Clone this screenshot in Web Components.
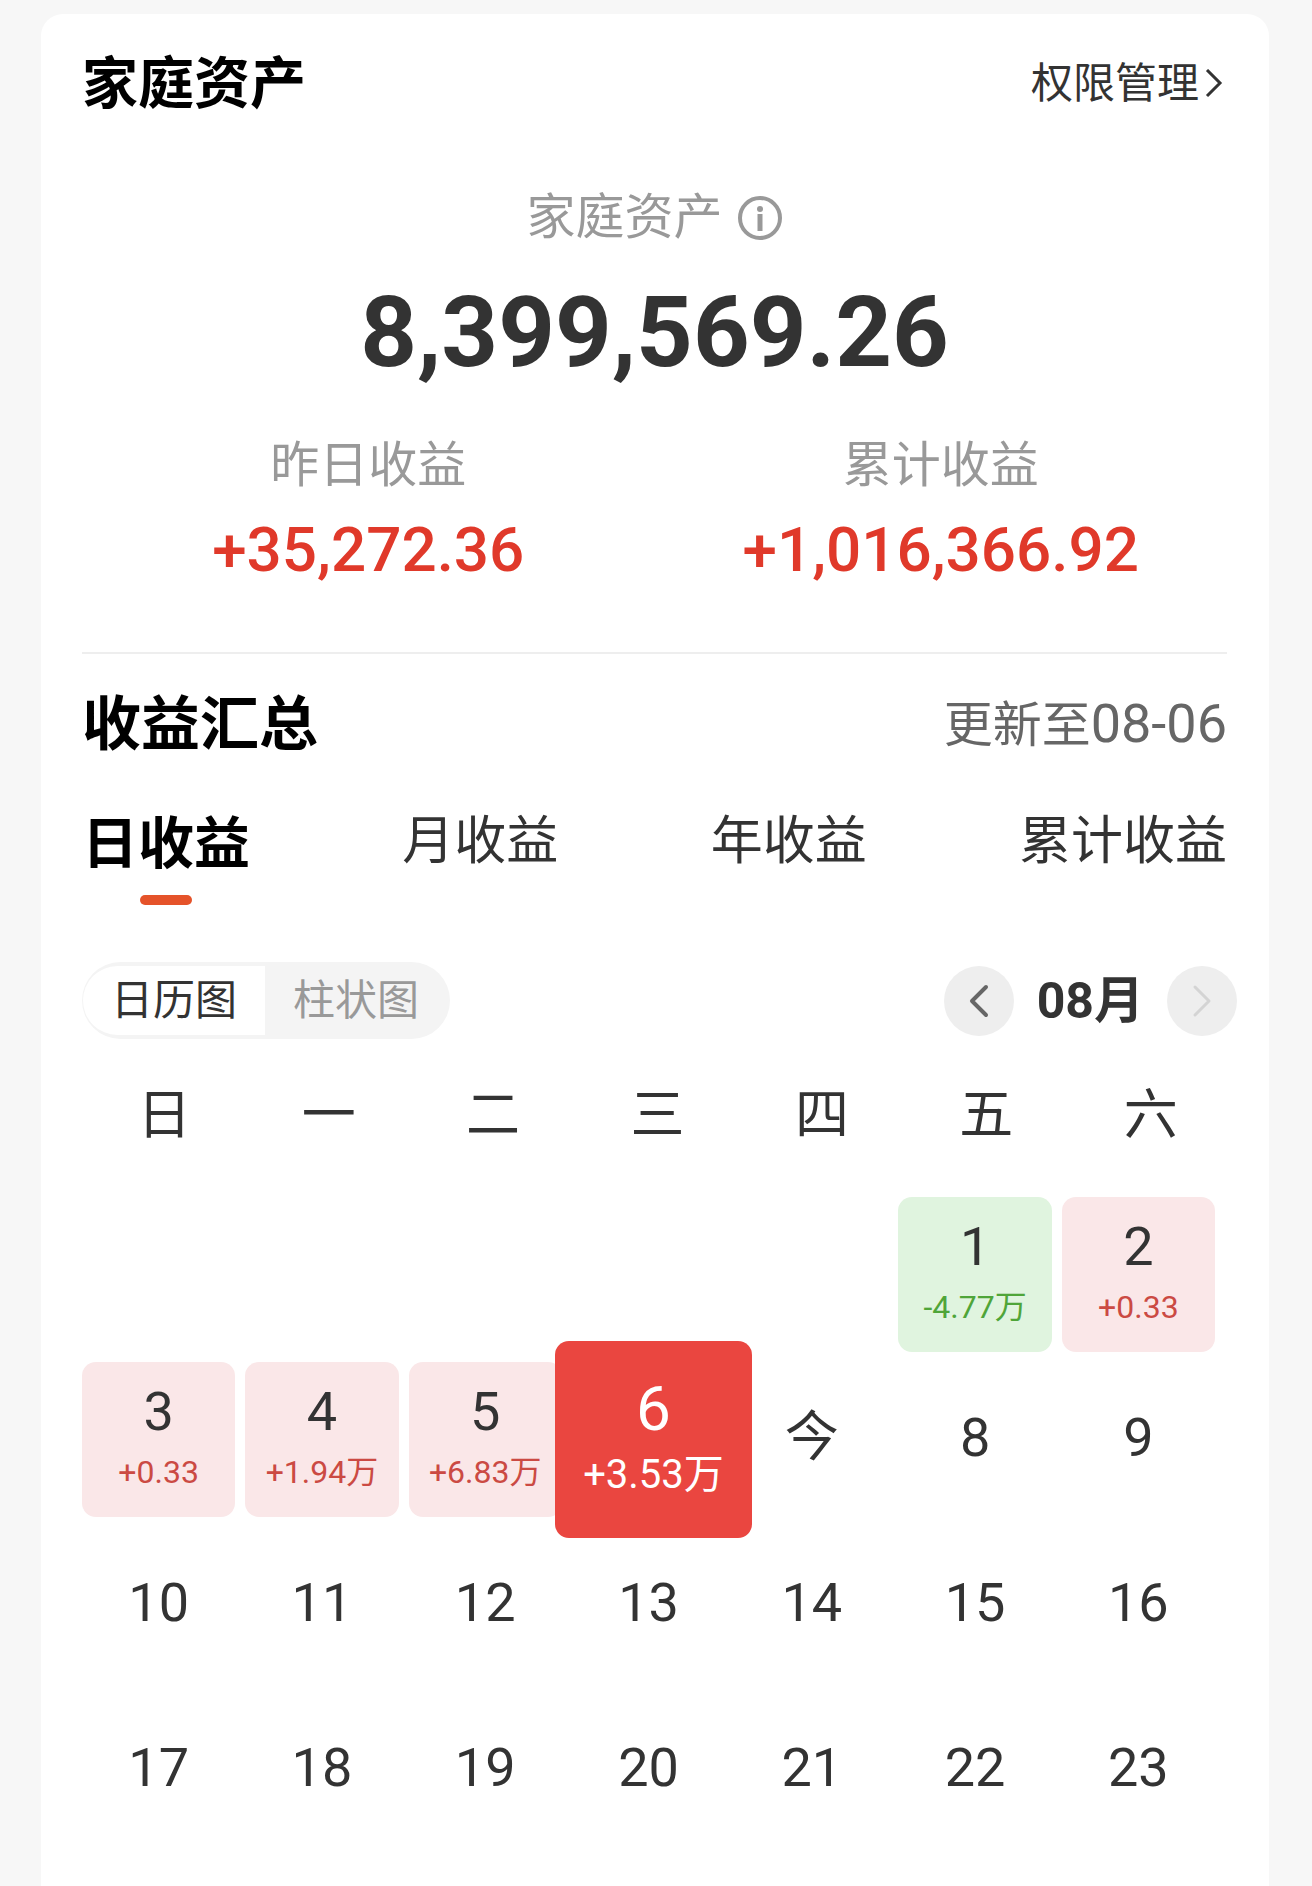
<!DOCTYPE html>
<html lang="zh-CN">
<head>
<meta charset="utf-8">
<meta name="viewport" content="width=device-width, initial-scale=1">
<title>家庭资产</title>
<style>
    body {
        margin: 0;
        background: #f7f7f7;
        color: #333;
        font-family: Roboto, "Noto Sans CJK SC", sans-serif;
    }
</style>
</head>
<body>
<asset-card>
    <card-header titre="家庭资产">
        <more-link slot="action">权限管理</more-link>
    </card-header>
    <asset-total label="家庭资产" montant="8,399,569.26">
        <asset-stat label="昨日收益">+35,272.36</asset-stat>
        <asset-stat label="累计收益">+1,016,366.92</asset-stat>
    </asset-total>
    <profit-summary></profit-summary>
</asset-card>

<script>
//style commun a tous les composants
const BASE = `
    *, *::before { box-sizing: border-box; }
    :host { display: block; }
    :host([hidden]) { display: none; }
    button {
        margin: 0;
        padding: 0;
        border: 0;
        background: none;
        color: inherit;
        font: inherit;
        cursor: pointer;
    }
    h1, h2, p { margin: 0; }
    svg { display: block; flex: none; }
`;

//carte blanche
class AssetCard extends HTMLElement {
    constructor() {
        super();
        this.attachShadow({ mode: 'open' }).innerHTML = `
        <style>
            ${BASE}
            :host {
                display: flow-root;
                min-height: 100vh;
                box-sizing: border-box;
                padding: 14px 43px 0 41px;
            }
            main {
                min-height: calc(100vh - 14px);
                padding: 30px 42px 36px 41px;
                border-radius: 22px 22px 0 0;
                background: #fff;
            }
        </style>
        <main><slot></slot></main>`;
    }
}

//titre a gauche, action a droite
class CardHeader extends HTMLElement {
    connectedCallback() {
        this.attachShadow({ mode: 'open' }).innerHTML = `
        <style>
            ${BASE}
            :host {
                display: flex;
                align-items: center;
                justify-content: space-between;
            }
            h2 {
                font-size: 56px;
                line-height: 80px;
                font-weight: 700;
                color: #000;
            }
            :host([grand]) h2 { font-size: 59px; }
        </style>
        <h2>${this.getAttribute('titre')}</h2>
        <slot name="action"></slot>`;
    }
}

class MoreLink extends HTMLElement {
    constructor() {
        super();
        this.attachShadow({ mode: 'open' }).innerHTML = `
        <style>
            ${BASE}
            a {
                display: flex;
                align-items: center;
                gap: 6px;
                padding-right: 4px;
                font-size: 42px;
                line-height: 60px;
                color: #333;
                text-decoration: none;
            }
        </style>
        <a href="#">
            <slot></slot>
            <svg width="18" height="30" viewBox="0 0 18 30" fill="none" stroke="#333" stroke-width="3">
                <path d="M2 1 15 14 2 27"/>
            </svg>
        </a>`;
    }
}

//montant total et ses deux statistiques
class AssetTotal extends HTMLElement {
    connectedCallback() {
        this.attachShadow({ mode: 'open' }).innerHTML = `
        <style>
            ${BASE}
            :host {
                padding: 64px 0 62px;
                border-bottom: 2px solid #eee;
                text-align: center;
            }
            .label {
                display: flex;
                align-items: center;
                justify-content: center;
                gap: 14px;
                font-size: 49px;
                line-height: 60px;
                color: #999;
            }
            .total {
                margin: 24px 0 44px;
                font-size: 99px;
                line-height: 120px;
                font-weight: 700;
            }
            .stats {
                display: grid;
                grid-template-columns: 1fr 1fr;
            }
        </style>
        <div class="label">
            <span>${this.getAttribute('label')}</span>
            <button aria-label="说明">
                <svg width="46" height="46" viewBox="0 0 46 46" fill="none" stroke="#999">
                    <circle cx="23" cy="23" r="20" stroke-width="4"/>
                    <circle cx="23" cy="14" r="3" fill="#999" stroke="none"/>
                    <path d="M23 19V36" stroke-width="5"/>
                </svg>
            </button>
        </div>
        <p class="total">${this.getAttribute('montant')}</p>
        <div class="stats"><slot></slot></div>`;
    }
}

class AssetStat extends HTMLElement {
    connectedCallback() {
        this.attachShadow({ mode: 'open' }).innerHTML = `
        <style>
            ${BASE}
            .label {
                font-size: 49px;
                line-height: 60px;
                color: #999;
            }
            .valeur {
                margin-top: 14px;
                font-size: 62px;
                line-height: 80px;
                font-weight: 500;
                color: #e0392a;
            }
        </style>
        <p class="label">${this.getAttribute('label')}</p>
        <p class="valeur"><slot></slot></p>`;
    }
}

//onglets jour / mois / annee / cumul
class ProfitTabs extends HTMLElement {
    connectedCallback() {
        const noms = ['日收益', '月收益', '年收益', '累计收益'];
        this.attachShadow({ mode: 'open' }).innerHTML = `
        <style>
            ${BASE}
            :host {
                display: flex;
                align-items: flex-start;
                justify-content: space-between;
            }
            button {
                font-size: 52px;
                line-height: 76px;
            }
            button[aria-selected="true"] {
                font-size: 56px;
                line-height: 80px;
                font-weight: 700;
                color: #000;
            }
            button[aria-selected="true"]::after {
                content: "";
                display: block;
                width: 52px;
                height: 10px;
                margin: 11px auto 0;
                border-radius: 5px;
                background: #e5532a;
            }
        </style>
        ${noms.map((nom, i) => `<button role="tab" aria-selected="${i === 0}">${nom}</button>`).join('')}`;
        this.setAttribute('role', 'tablist');
    }
}

//choix de la vue: calendrier ou barres
class ViewSwitch extends HTMLElement {
    constructor() {
        super();
        this.attachShadow({ mode: 'open' }).innerHTML = `
        <style>
            ${BASE}
            :host {
                display: flex;
                padding: 4px 3px 4px 1px;
                border-radius: 39px;
                background: #f4f4f4;
            }
            button {
                padding: 0 28px;
                font-size: 42px;
                line-height: 69px;
                color: #999;
            }
            button[aria-pressed="true"] {
                border-radius: 35px 0 0 35px;
                background: #fff;
                color: #333;
            }
        </style>
        <button aria-pressed="true">日历图</button>
        <button aria-pressed="false">柱状图</button>`;
    }
}

class MonthNav extends HTMLElement {
    constructor() {
        super();
        this.attachShadow({ mode: 'open' }).innerHTML = `
        <style>
            ${BASE}
            :host {
                display: flex;
                align-items: center;
                gap: 23px;
                font-size: 50px;
                line-height: 70px;
                font-weight: 700;
            }
            button {
                display: grid;
                place-items: center;
                width: 70px;
                height: 70px;
                border-radius: 50%;
                background: #eee;
                color: #666;
            }
            button:disabled { color: #d4d4d4; }
        </style>
        <button aria-label="上个月">
            <svg width="20" height="34" viewBox="0 0 20 34" fill="none" stroke="currentColor" stroke-width="4" stroke-linecap="round" stroke-linejoin="round">
                <path d="M17 3 3 17 17 31"/>
            </svg>
        </button>
        <span><slot></slot></span>
        <button aria-label="下个月" disabled>
            <svg width="20" height="34" viewBox="0 0 20 34" fill="none" stroke="currentColor" stroke-width="3" stroke-linecap="round" stroke-linejoin="round">
                <path d="M3 3 17 17 3 31"/>
            </svg>
        </button>`;
    }
}

//une case du calendrier
class DayCell extends HTMLElement {
    connectedCallback() {
        const gain = this.getAttribute('gain');
        this.attachShadow({ mode: 'open' }).innerHTML = `
        <style>
            ${BASE}
            :host {
                position: relative;
                height: 155px;
            }
            button {
                display: flex;
                flex-direction: column;
                align-items: center;
                justify-content: center;
                gap: 8px;
                width: 100%;
                height: 100%;
                padding-bottom: 4px;
                border-radius: 14px;
                font-size: 54px;
                line-height: 60px;
            }
            small {
                font-size: 32px;
                line-height: 44px;
            }
            :host([etat="hausse"]) button { background: #fae7e8; }
            :host([etat="hausse"]) small { color: #cb4a43; }
            :host([etat="baisse"]) button { background: #e0f4df; }
            :host([etat="baisse"]) small { color: #4fa539; }
            /* la case choisie deborde sur ses voisines */
            :host([etat="choisi"]) button {
                position: absolute;
                inset: -21px -27px -21px -17px;
                gap: 14px;
                width: auto;
                height: auto;
                background: #ea4640;
                color: #fff;
                font-size: 62px;
            }
            :host([etat="choisi"]) small { font-size: 40px; }
        </style>
        <button><span>${this.getAttribute('jour')}</span>${gain ? `<small>${gain}</small>` : ''}</button>`;
    }
}

class ProfitCalendar extends HTMLElement {
    connectedCallback() {
        const gains = {
            1: ['-4.77万', 'baisse'],
            2: ['+0.33', 'hausse'],
            3: ['+0.33', 'hausse'],
            4: ['+1.94万', 'hausse'],
            5: ['+6.83万', 'hausse'],
            6: ['+3.53万', 'choisi']
        };
        const aujourdhui = 7;
        let cases = '';
        for (let jour = 1; jour <= 23; jour++) {
            const [gain, etat] = gains[jour] || ['', ''];
            cases += `<day-cell jour="${jour === aujourdhui ? '今' : jour}" gain="${gain}" etat="${etat}"></day-cell>`;
        }
        this.attachShadow({ mode: 'open' }).innerHTML = `
        <style>
            ${BASE}
            .semaine, .jours {
                display: grid;
                grid-template-columns: repeat(7, 1fr);
            }
            .semaine {
                margin-right: -6px;
                font-size: 54px;
                line-height: 80px;
                text-align: center;
            }
            .jours {
                gap: 10px;
                margin: 41px 12px 0 0;
            }
            /* le premier du mois est un vendredi */
            day-cell:first-child { grid-column-start: 6; }
        </style>
        <div class="semaine">${[...'日一二三四五六'].map(j => `<span>${j}</span>`).join('')}</div>
        <div class="jours">${cases}</div>`;
    }
}

class ProfitSummary extends HTMLElement {
    constructor() {
        super();
        this.attachShadow({ mode: 'open' }).innerHTML = `
        <style>
            ${BASE}
            :host { padding-top: 31px; }
            .maj {
                font-size: 49px;
                line-height: 60px;
                color: #666;
            }
            .maj time { font-size: 54px; }
            profit-tabs { margin-top: 39px; }
            .outils {
                display: flex;
                align-items: center;
                justify-content: space-between;
                margin: 57px -10px 37px 0;
            }
        </style>
        <card-header titre="收益汇总" grand>
            <span slot="action" class="maj">更新至<time datetime="08-06">08-06</time></span>
        </card-header>
        <profit-tabs></profit-tabs>
        <div class="outils">
            <view-switch></view-switch>
            <month-nav>08月</month-nav>
        </div>
        <profit-calendar></profit-calendar>`;
    }
}

//registre des composants
window.customElements.define('asset-card', AssetCard);
window.customElements.define('card-header', CardHeader);
window.customElements.define('more-link', MoreLink);
window.customElements.define('asset-total', AssetTotal);
window.customElements.define('asset-stat', AssetStat);
window.customElements.define('profit-tabs', ProfitTabs);
window.customElements.define('view-switch', ViewSwitch);
window.customElements.define('month-nav', MonthNav);
window.customElements.define('day-cell', DayCell);
window.customElements.define('profit-calendar', ProfitCalendar);
window.customElements.define('profit-summary', ProfitSummary);
</script>
</body>
</html>
